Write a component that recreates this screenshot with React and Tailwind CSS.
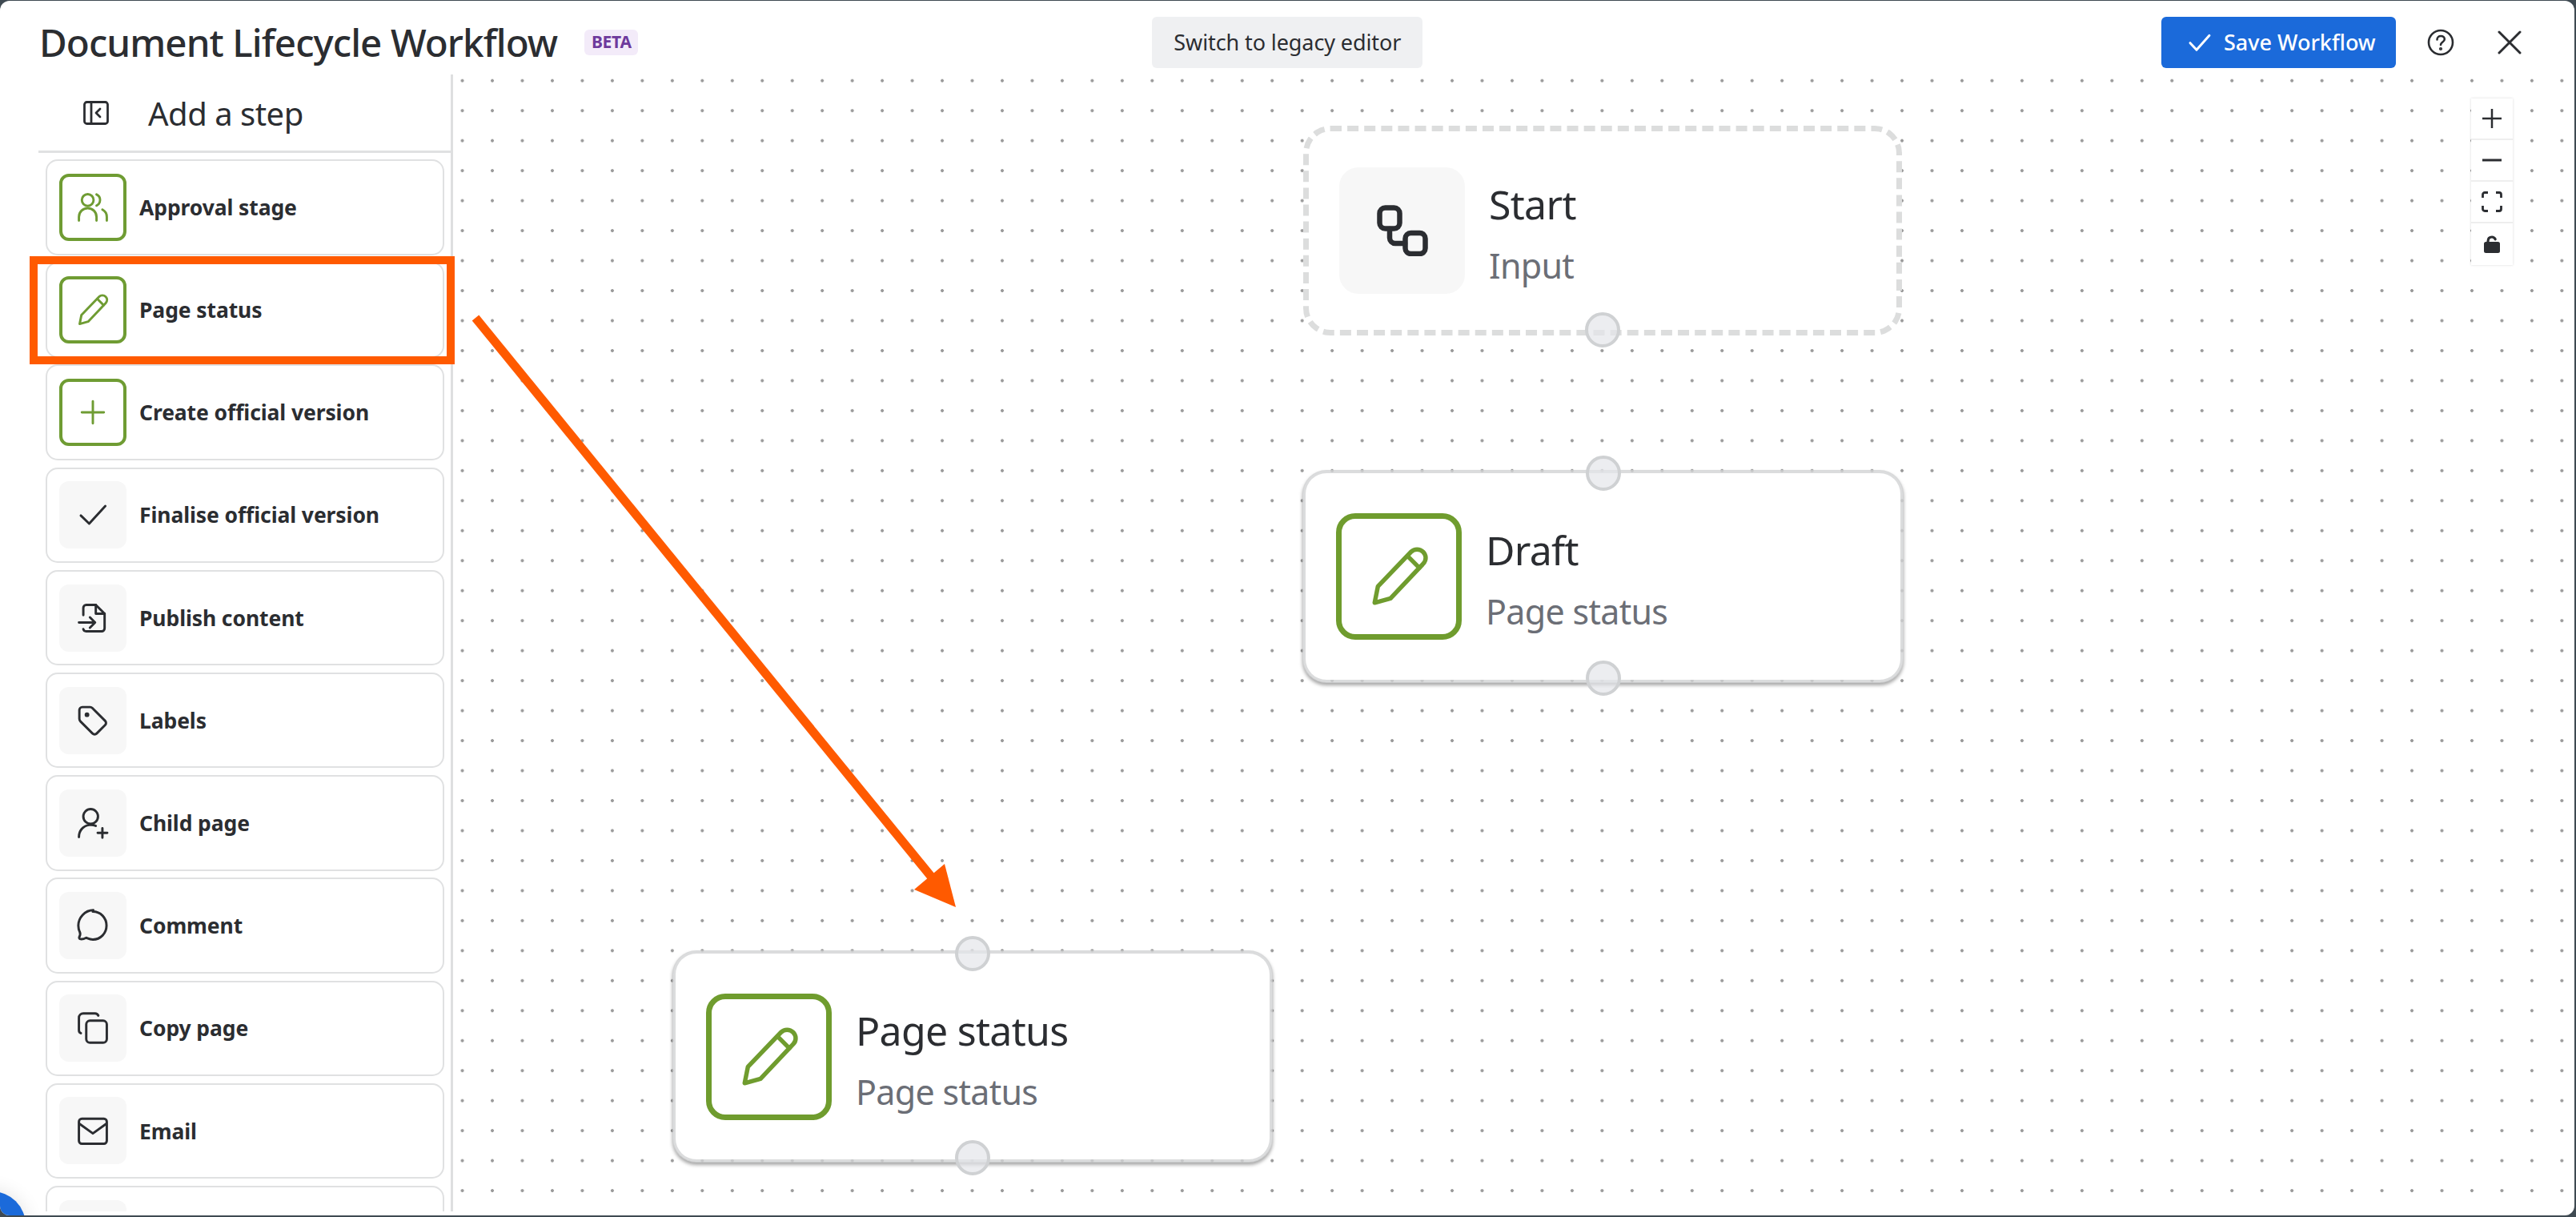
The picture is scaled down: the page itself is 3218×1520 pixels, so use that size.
import React from 'react';

const Icon = ({ size = 44, children, className = '' }) => (
  <svg
    width={size}
    height={size}
    viewBox="0 0 24 24"
    fill="none"
    stroke="currentColor"
    strokeWidth="1.6"
    strokeLinecap="round"
    strokeLinejoin="round"
    className={className}
  >
    {children}
  </svg>
);

const pencil = (
  <>
    <path d="M3 21.6 4.2 15.6 16.3 3C17.5 1.8 19.5 1.8 20.7 3 21.9 4.2 22 6 20.8 7.3L8.8 20Z" />
    <path d="M15 4.5 19.3 8.8" />
  </>
);

const users = (
  <>
    <circle cx="8.5" cy="7" r="4" />
    <path d="M14.5 3.2a4.2 4.2 0 0 1 0 7.6" />
    <path d="M2.5 21v-2.5a6 6 0 0 1 12 0V21" />
    <path d="M18.5 13.5c1.9 1 3 2.800 3 5V21" />
  </>
);

const plus = <path d="M12 4.500v15M4.500 12h15" />;
const check = <path d="M3.800 12.500 9.500 18 20.500 6" />;

const publish = (
  <>
    <path d="M5.500 10V5a2 2 0 0 1 2-2H14l6 6v10a2 2 0 0 1-2 2H7.500a2 2 0 0 1-2-1.500" />
    <path d="M14 3v6h6" />
    <path d="M2.500 15h11M10 11.500l3.500 3.500-3.500 3.500" />
  </>
);

const tag = (
  <>
    <path d="M2.800 4.800a2 2 0 0 1 2-2h5.400a2 2 0 0 1 1.400.6l8.800 8.800a2 2 0 0 1 0 2.800l-5.800 5.800a2 2 0 0 1-2.800 0l-8.200-8.200a2.600 2.600 0 0 1-.8-1.800Z" />
    <circle cx="8" cy="8" r=".8" fill="currentColor" />
  </>
);

const childPage = (
  <>
    <circle cx="10.500" cy="7.500" r="5" />
    <path d="M2.500 21.500c0-4.200 2.600-7.500 7-8.200 1.500-.2 3.200 0 4.500.6" />
    <path d="M18.500 15.500v6.500M15.300 18.700h6.500" />
  </>
);

const comment = (
  <path d="M12 2.500c5.200 0 9.300 4.200 9.300 9.500s-4.100 9.500-9.300 9.500c-1.700 0-3-.6-4.500-1.200-1.200.6-3 1.200-4.300.8-.7-.3-.6-1-.3-1.600.5-1 .7-2 .2-3-.6-1.300-1-2.700-1-4.500 0-5.300 4.500-10.500 10.200-10.500Z" />
);

const copy = (
  <>
    <rect x="7.500" y="7" width="14" height="15" rx="2.500" />
    <path d="M3.800 15.500c-.8-.3-1.300-1-1.300-2V5a3 3 0 0 1 3-3h8c1 0 1.800.5 2.200 1.500" />
  </>
);

const mail = (
  <>
    <rect x="2.500" y="4" width="19" height="17" rx="2" />
    <path d="M3 7.500 12 14l9-6.500" />
  </>
);

const steps = [
  { label: 'Approval stage', icon: users, active: true },
  { label: 'Page status', icon: pencil, active: true },
  { label: 'Create official version', icon: plus, active: true },
  { label: 'Finalise official version', icon: check },
  { label: 'Publish content', icon: publish },
  { label: 'Labels', icon: tag },
  { label: 'Child page', icon: childPage },
  { label: 'Comment', icon: comment },
  { label: 'Copy page', icon: copy },
  { label: 'Email', icon: mail },
  { label: '', icon: null },
];

const StepCard = ({ label, icon, active }) => (
  <div className="flex h-[119.5px] w-[498px] shrink-0 items-center rounded-[15px] border-2 border-[#e0e1e2] bg-white pl-[15px]">
    <div
      className={
        active
          ? 'flex h-[84px] w-[84px] shrink-0 items-center justify-center rounded-[12px] border-[4px] border-[#6f9c33] text-[#6f9c33]'
          : 'flex h-[84px] w-[84px] shrink-0 items-center justify-center rounded-[12px] bg-[#f7f7f7] text-[#2b2d31]'
      }
    >
      {icon && <Icon>{icon}</Icon>}
    </div>
    <span className="ml-[16px] pt-[2px] text-[26.500px] font-bold tracking-[-0.1px] text-[#2b2d31]">{label}</span>
  </div>
);

const Handle = ({ className }) => (
  <div className={`absolute left-1/2 h-[44px] w-[44px] -translate-x-1/2 rounded-full border-[4px] border-[#cfd1d3] bg-[#e4e6e9]/70 ${className}`} />
);

const NodeText = ({ title, subtitle }) => (
  <div className="ml-[30px] flex flex-col pt-[6px]">
    <span className="text-[50px] leading-[70px] tracking-[-0.7px] text-[#2b2d31]">{title}</span>
    <span className="mt-[12px] text-[43px] leading-[60px] tracking-[-0.7px] text-[#6b6e76]">{subtitle}</span>
  </div>
);

const StatusNode = ({ className, title, subtitle }) => (
  <div className={`absolute flex items-center rounded-[30px] border-[4px] border-[#d2d3d4]/80 bg-white bg-clip-padding pl-[38px] shadow-[0_3px_4px_rgba(0,0,0,0.35)] ${className}`}>
    <div className="flex h-[158px] w-[157px] shrink-0 items-center justify-center rounded-[24px] border-[7px] border-[#6f9c2e] text-[#6f9c2e]">
      <Icon size={82}>{pencil}</Icon>
    </div>
    <NodeText title={title} subtitle={subtitle} />
    <Handle className="top-[-22px]" />
    <Handle className="bottom-[-20px]" />
  </div>
);

const App = () => {
  return (
    <div className="relative h-[1520px] w-[3218px] overflow-hidden bg-[#3f4a52] pb-[2px] pr-[2px] pt-px font-['Noto_Sans',sans-serif]">
      <div className="relative flex h-full w-full flex-col overflow-hidden rounded-[12px] bg-white">
        {/* Header */}
        <header className="relative flex h-[92px] shrink-0 items-center pl-[49px] pr-[66px] pt-[12px]">
          <h1 className="text-[47.500px] font-medium tracking-[-0.9px] text-[#2b2d31]">Document Lifecycle Workflow</h1>
          <span className="ml-[34px] flex h-[32px] w-[67px] items-center justify-center rounded-[6px] bg-[#f3ebf9] text-[21px] font-bold tracking-[-0.3px] text-[#6e3a9c]">BETA</span>
          <button className="ml-[642px] flex h-[64px] w-[338px] items-center justify-center rounded-[6px] bg-[#eff0f2] text-[27px] tracking-[-0.1px] text-[#2b2d31]">Switch to legacy editor</button>
          <button className="ml-auto flex h-[64px] w-[293px] items-center rounded-[6px] bg-[#1b6ada] pl-[32px] text-[27px] font-medium text-white">
            <Icon size={32} className="mr-[14px]"><path d="M3 12.500 9 19 21 5.500" strokeWidth="2.200" /></Icon>
            Save Workflow
          </button>
          <svg width="34" height="34" viewBox="0 0 34 34" className="ml-[39px] text-[#2b2d31]" fill="none" stroke="currentColor" strokeWidth="2.600" strokeLinecap="round">
            <circle cx="17" cy="17" r="15" />
            <path d="M12.500 13.500c0-3 2.200-4.500 4.700-4.500s4.600 1.600 4.600 4c0 3.500-4.800 3.500-4.800 7" />
            <circle cx="17" cy="25" r=".8" fill="currentColor" />
          </svg>
          <svg width="30" height="30" viewBox="0 0 30 30" className="ml-[54px] text-[#2b2d31]" fill="none" stroke="currentColor" strokeWidth="3" strokeLinecap="round">
            <path d="M2 2 28 28M28 2 2 28" />
          </svg>
        </header>

        <div className="flex min-h-0 flex-1 pb-[5px]">
          {/* Sidebar */}
          <aside className="flex h-full w-[566px] shrink-0 flex-col overflow-hidden pl-[48px]">
            <div className="flex h-full flex-col overflow-hidden border-r-[3px] border-[#dedfe0]">
              <div className="flex h-[98px] shrink-0 items-center border-b-[3px] border-[#e0e1e2] pl-[56px]">
                <svg width="32" height="30" viewBox="0 0 32 30" fill="none" stroke="#2b2d31" strokeWidth="2.800" strokeLinecap="round" strokeLinejoin="round">
                  <rect x="1.500" y="1.500" width="29" height="27" rx="3" />
                  <path d="M10 1.500v27" />
                  <path d="M21 10l-5 5 5 5" />
                </svg>
                <span className="ml-[49px] pt-[2px] text-[40px] leading-none tracking-[-0.5px] text-[#2b2d31]">Add a step</span>
              </div>
              <div className="flex flex-col gap-[8.7px] pl-[9px] pt-[8px]">
                {steps.map((step, i) => (
                  <StepCard key={i} {...step} />
                ))}
              </div>
            </div>
          </aside>

          {/* Canvas */}
          <main className="relative min-w-0 flex-1 bg-[radial-gradient(circle,#9a9a9a_1.7px,transparent_2.2px)] bg-[size:37.47px_37.47px] bg-[position:-7.2px_-11px]">
            <div className="absolute left-[1062px] top-[64px] flex h-[262px] w-[748px] items-center rounded-[34px] border-[7px] border-dashed border-[#dcdddd] bg-white bg-clip-padding pl-[38px]">
              <div className="flex h-[158px] w-[157px] shrink-0 items-center justify-center rounded-[24px] bg-[#f7f7f7]">
                <svg width="64" height="64" viewBox="0 0 64 64" fill="none" stroke="#2b2d31" strokeWidth="6.500" strokeLinecap="round" strokeLinejoin="round">
                  <rect x="3.500" y="3.500" width="25" height="26" rx="7" />
                  <rect x="35.500" y="35" width="25" height="26" rx="7" />
                  <path d="M16 30v11a7 7 0 0 0 7 7h12" />
                </svg>
              </div>
              <NodeText title="Start" subtitle="Input" />
              <Handle className="bottom-[-22px]" />
            </div>

            <StatusNode className="left-[1061px] top-[494px] h-[266px] w-[751px]" title="Draft" subtitle="Page status" />
            <StatusNode className="left-[274px] top-[1094px] h-[265px] w-[750px]" title="Page status" subtitle="Page status" />

            {/* Zoom controls */}
            <div className="absolute left-[2521px] top-[30px] flex w-[52px] flex-col bg-white text-[#2b2d31] shadow-[0_0_3px_rgba(0,0,0,0.15)]">
              <button className="flex h-[52px] items-center justify-center border-b-[2px] border-[#eeeeee]">
                <svg width="26" height="26" viewBox="0 0 26 26" stroke="currentColor" strokeWidth="2.500"><path d="M13 1v24M1 13h24" /></svg>
              </button>
              <button className="flex h-[52px] items-center justify-center border-b-[2px] border-[#eeeeee]">
                <svg width="26" height="26" viewBox="0 0 26 26" stroke="currentColor" strokeWidth="2.800"><path d="M1 13h24" /></svg>
              </button>
              <button className="flex h-[52px] items-center justify-center border-b-[2px] border-[#eeeeee]">
                <svg width="26" height="26" viewBox="0 0 26 26" fill="none" stroke="currentColor" strokeWidth="2.800">
                  <path d="M1.500 8V4a2.500 2.500 0 0 1 2.500-2.500h4M18 1.500h4A2.500 2.500 0 0 1 24.500 4v4M24.500 18v4a2.500 2.500 0 0 1-2.500 2.500h-4M8 24.500H4A2.500 2.500 0 0 1 1.500 22v-4" />
                </svg>
              </button>
              <button className="flex h-[52px] items-center justify-center">
                <svg width="20" height="22" viewBox="0 0 20 22" fill="none">
                  <rect x="0" y="8" width="20" height="14" rx="2.500" fill="currentColor" />
                  <path d="M5 10V7.500C5 4 7 2 10 2c2 0 3.300 1 4.200 2.800" stroke="currentColor" strokeWidth="3.200" strokeLinecap="round" />
                </svg>
              </button>
            </div>
          </main>
        </div>

        {/* Help launcher peeking in from the corner */}
        <div className="absolute bottom-[-54px] left-[-52px] h-[84px] w-[84px] rounded-full bg-[#1b6ada] shadow-[0_0_24px_rgba(0,0,0,0.12)]" />
      </div>

      {/* Annotation */}
      <div className="absolute left-[37px] top-[320px] h-[135px] w-[531px] border-[10px] border-[#ff5a00]" />
      <svg className="absolute left-0 top-0" width="3218" height="1520" fill="none">
        <path d="M594 397 1165 1097" stroke="#ff5a00" strokeWidth="11" />
        <path d="M1194 1133 1180 1079 1142 1111Z" fill="#ff5a00" />
      </svg>
    </div>
  );
};

export default App;
